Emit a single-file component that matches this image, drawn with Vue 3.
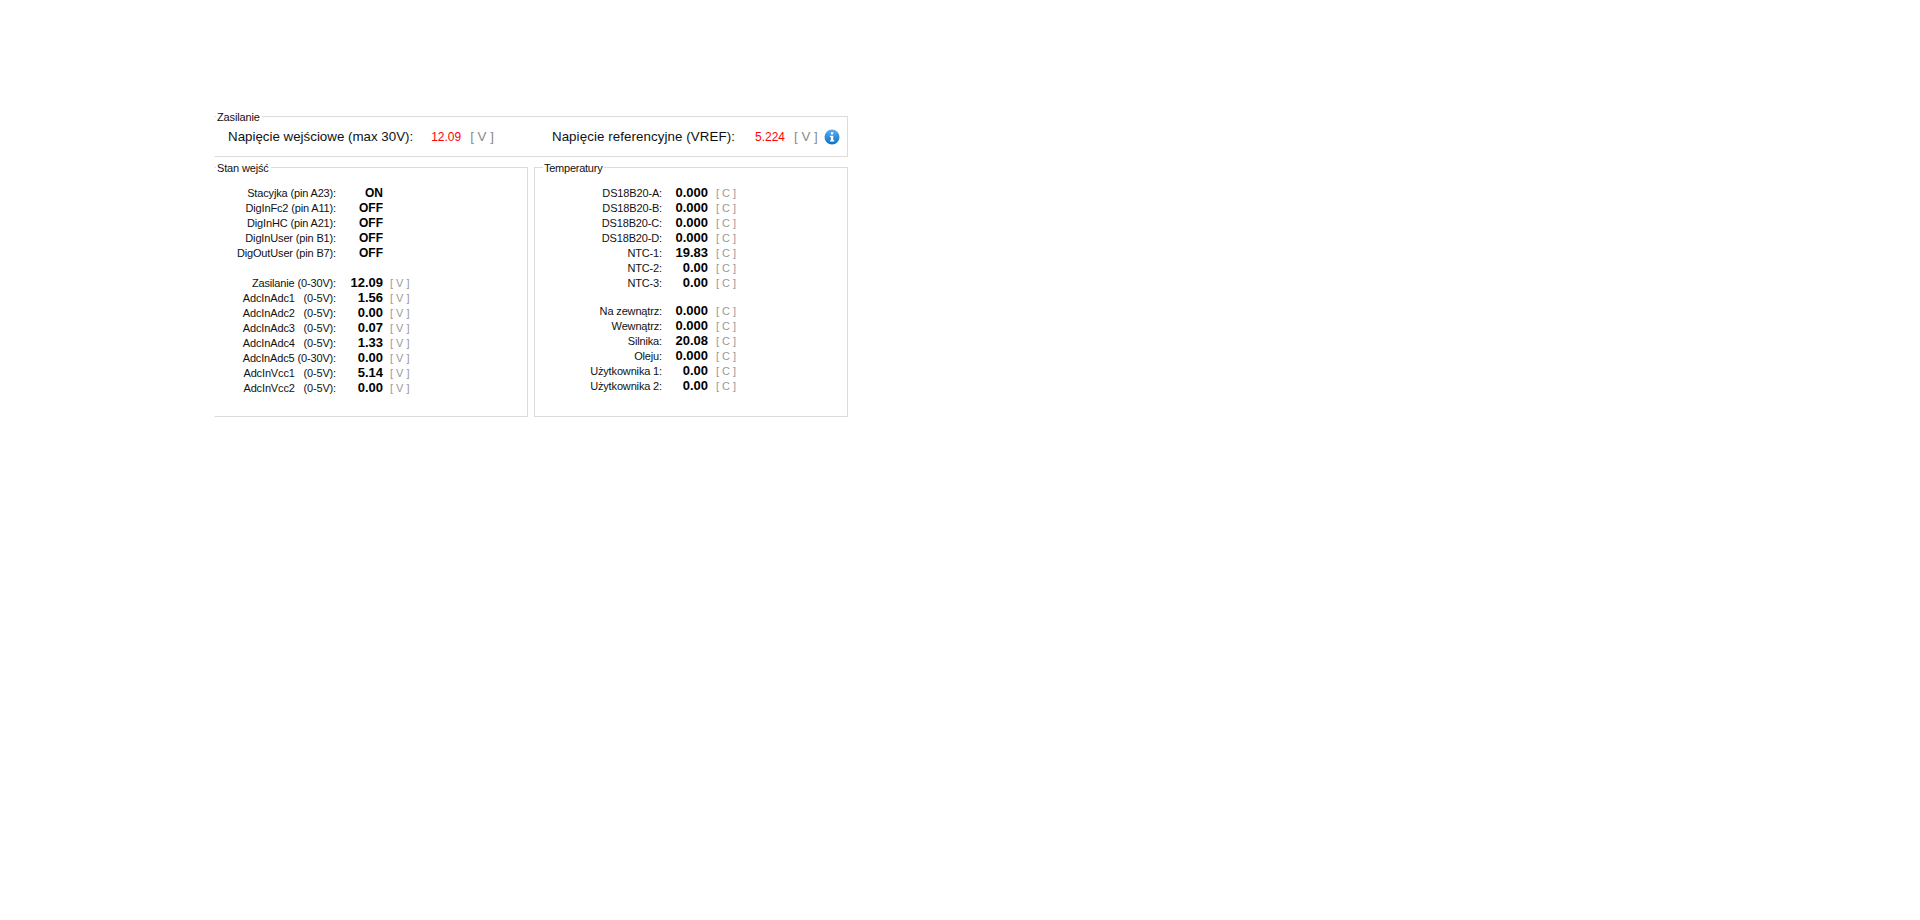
<script setup>
const inputs = [
  [
    { label: 'Stacyjka (pin A23):', value: 'ON', state: true },
    { label: 'DigInFc2 (pin A11):', value: 'OFF', state: true },
    { label: 'DigInHC (pin A21):', value: 'OFF', state: true },
    { label: 'DigInUser (pin B1):', value: 'OFF', state: true },
    { label: 'DigOutUser (pin B7):', value: 'OFF', state: true },
  ],
  [
    { label: 'Zasilanie (0-30V):', value: '12.09', unit: '[ V ]' },
    { label: 'AdcInAdc1   (0-5V):', value: '1.56', unit: '[ V ]' },
    { label: 'AdcInAdc2   (0-5V):', value: '0.00', unit: '[ V ]' },
    { label: 'AdcInAdc3   (0-5V):', value: '0.07', unit: '[ V ]' },
    { label: 'AdcInAdc4   (0-5V):', value: '1.33', unit: '[ V ]' },
    { label: 'AdcInAdc5 (0-30V):', value: '0.00', unit: '[ V ]' },
    { label: 'AdcInVcc1   (0-5V):', value: '5.14', unit: '[ V ]' },
    { label: 'AdcInVcc2   (0-5V):', value: '0.00', unit: '[ V ]' },
  ],
]
const temps = [
  [
    { label: 'DS18B20-A:', value: '0.000', unit: '[ C ]' },
    { label: 'DS18B20-B:', value: '0.000', unit: '[ C ]' },
    { label: 'DS18B20-C:', value: '0.000', unit: '[ C ]' },
    { label: 'DS18B20-D:', value: '0.000', unit: '[ C ]' },
    { label: 'NTC-1:', value: '19.83', unit: '[ C ]' },
    { label: 'NTC-2:', value: '0.00', unit: '[ C ]' },
    { label: 'NTC-3:', value: '0.00', unit: '[ C ]' },
  ],
  [
    { label: 'Na zewnątrz:', value: '0.000', unit: '[ C ]' },
    { label: 'Wewnątrz:', value: '0.000', unit: '[ C ]' },
    { label: 'Silnika:', value: '20.08', unit: '[ C ]' },
    { label: 'Oleju:', value: '0.000', unit: '[ C ]' },
    { label: 'Użytkownika 1:', value: '0.00', unit: '[ C ]' },
    { label: 'Użytkownika 2:', value: '0.00', unit: '[ C ]' },
  ],
]
</script>

<template>
  <div class="page">
    <section class="group supply">
      <span class="legend">Zasilanie</span>
      <span class="sup-label first">Napięcie wejściowe (max 30V):</span>
      <span class="sup-value v1">12.09</span>
      <span class="sup-unit">[ V ]</span>
      <span class="sup-label second">Napięcie referencyjne (VREF):</span>
      <span class="sup-value v2">5.224</span>
      <span class="sup-unit u2">[ V ]</span>
      <svg class="info" width="16" height="16" viewBox="0 0 16 16" aria-hidden="true">
        <defs>
          <linearGradient id="infoFill" x1="0" y1="0" x2="0" y2="1">
            <stop offset="0" stop-color="#5aaef0" />
            <stop offset="1" stop-color="#0a6fc8" />
          </linearGradient>
        </defs>
        <circle cx="8" cy="8" r="7.5" fill="url(#infoFill)" />
        <rect x="6.9" y="3.2" width="2.4" height="2.2" fill="#fff" />
        <path d="M5.9 6.7h3.4v4.5h1v1.4H5.9v-1.4h1V8.1h-1z" fill="#fff" />
      </svg>
    </section>

    <div class="panels">
      <section class="group panel inputs">
        <span class="legend">Stan wejść</span>
        <div v-for="(block, b) in inputs" :key="b" class="block">
          <div v-for="row in block" :key="row.label" class="row">
            <span class="label">{{ row.label }}</span>
            <span class="value" :class="{ state: row.state }">{{ row.value }}</span>
            <span v-if="row.unit" class="unit">{{ row.unit }}</span>
          </div>
        </div>
      </section>

      <section class="group panel temps">
        <span class="legend">Temperatury</span>
        <div v-for="(block, b) in temps" :key="b" class="block">
          <div v-for="row in block" :key="row.label" class="row">
            <span class="label">{{ row.label }}</span>
            <span class="value">{{ row.value }}</span>
            <span class="unit">{{ row.unit }}</span>
          </div>
        </div>
      </section>
    </div>
  </div>
</template>

<style>
html,
body {
  margin: 0;
  background: #fff;
}
</style>

<style scoped>
.page {
  width: 634px;
  padding: 116px 0 0 214px;
  font-family: "Liberation Sans", Arial, sans-serif;
  font-size: 11px;
  color: #111;
}
.group {
  position: relative;
  box-sizing: border-box;
  border: 1px solid #dcdcdc;
}
.legend {
  position: absolute;
  left: 1px;
  top: -7px;
  padding: 0 2px 0 1px;
  line-height: 14px;
  font-size: 11px;
  letter-spacing: -0.15px;
  background: #fff;
  white-space: nowrap;
}
.temps .legend {
  left: 8px;
  letter-spacing: -0.25px;
}
.supply {
  display: flex;
  align-items: center;
  height: 41px;
  border-left-color: transparent;
  font-size: 13.33px;
}
.sup-label.first {
  margin-left: 13px;
}
.sup-label.second {
  margin-left: 58px;
  letter-spacing: 0.08px;
}
.sup-value {
  color: #f00;
  font-size: 12px;
}
.v1 {
  margin-left: 18px;
}
.v2 {
  margin-left: 20px;
}
.sup-unit {
  margin-left: 9px;
  color: #8a8a8a;
  white-space: pre;
}
.info {
  margin-left: 6px;
}
.panels {
  display: flex;
  gap: 6px;
  margin-top: 10px;
}
.panel {
  width: 314px;
  height: 250px;
  padding-top: 17px;
}
.inputs {
  padding-top: 18px;
  border-left-color: transparent;
}
.block + .block {
  margin-top: 14px;
}
.temps .block + .block {
  margin-top: 13px;
}
.row {
  display: flex;
  align-items: baseline;
  height: 15px;
  line-height: 15px;
  white-space: pre;
}
.label {
  text-align: right;
  letter-spacing: -0.15px;
}
.inputs .label {
  width: 121px;
}
.temps .label {
  width: 127px;
}
.value {
  width: 47px;
  text-align: right;
  font-weight: 700;
  font-size: 13px;
  color: #000;
}
.value.state {
  font-size: 12px;
}
.temps .value {
  width: 46px;
}
.unit {
  margin-left: 7px;
  color: #999;
  white-space: pre;
}
.temps .unit {
  margin-left: 8px;
}
</style>
